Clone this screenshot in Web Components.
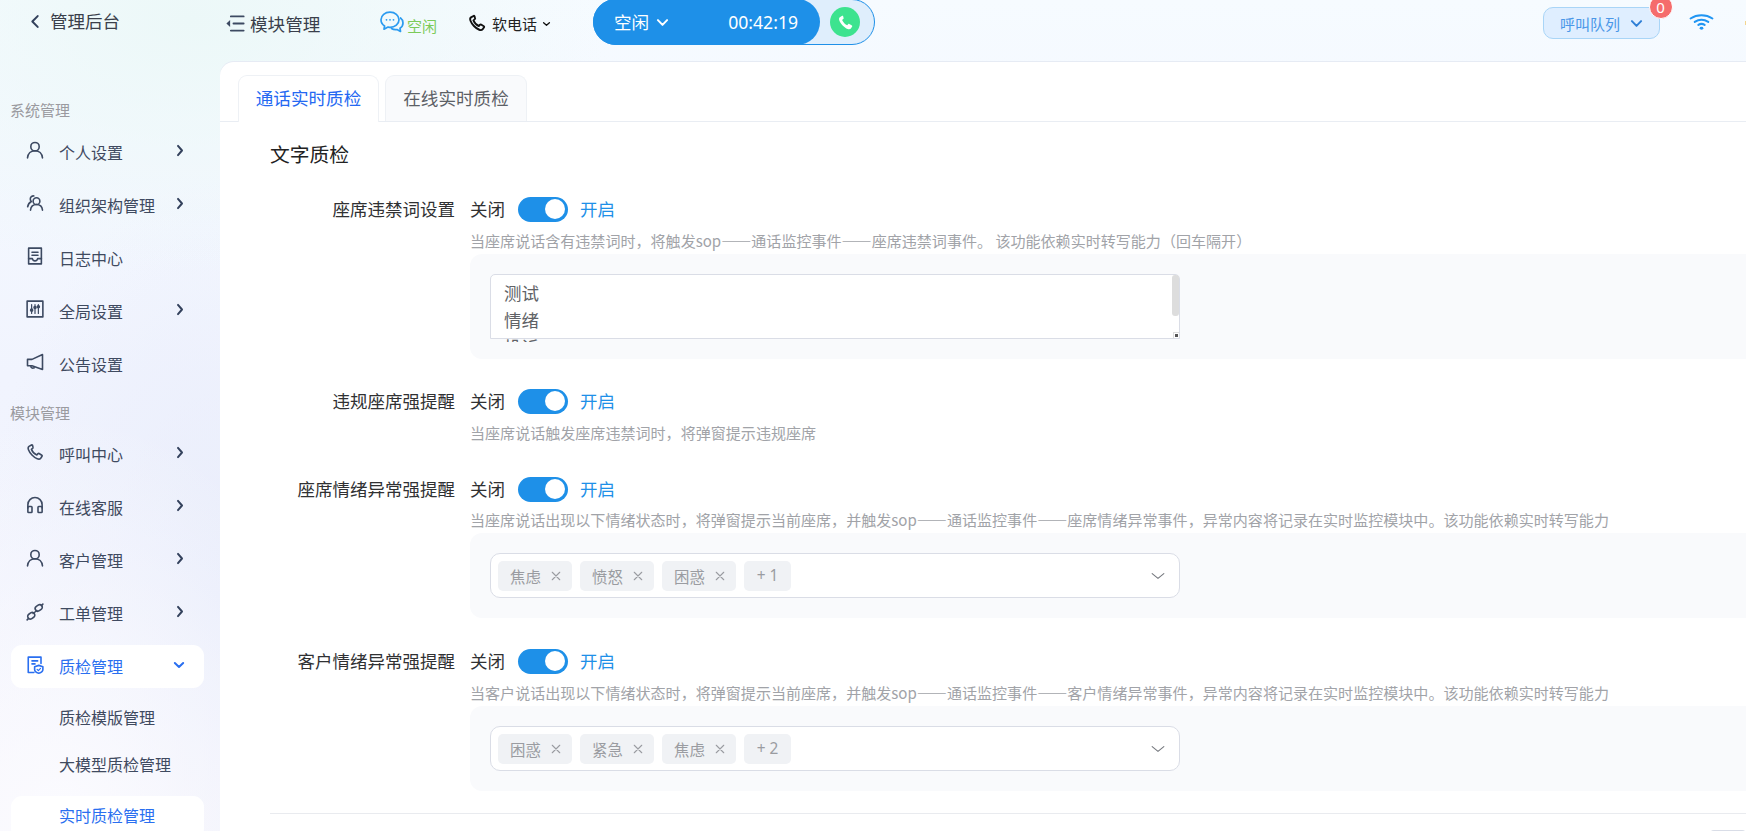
<!DOCTYPE html>
<html lang="zh-CN">
<head>
<meta charset="utf-8">
<title>实时质检管理</title>
<style>
html,body{margin:0;padding:0;height:831px;overflow:hidden}
body{font-family:"Noto Sans CJK SC","Noto Sans",sans-serif;color:#303133;
background:
radial-gradient(420px 260px at 190px 20px,#ecf8f8 0%,rgba(236,248,248,0) 100%),
radial-gradient(300px 420px at 60px 830px,#fbfbff 0%,rgba(251,251,255,0) 100%),
radial-gradient(240px 420px at 220px 600px,#e9edfb 0%,rgba(233,237,251,0) 100%),
linear-gradient(180deg,#f6fbff 0%,#f1f4fe 45%,#f1f3fd 70%,#f6f4fa 100%);}
</style>
</head>
<body>
<app-shell></app-shell>
<script>
const ICONS={
back:'<path d="M20 2L4 12l16 10" stroke-width="2"/>',
user:'<circle cx="12" cy="7.5" r="5.6"/><path d="M2 22.500c.6-5.800 4.600-9.600 10-9.600s9.400 3.800 10 9.600"/>',
org:'<circle cx="14" cy="9.500" r="4.500"/><path d="M6 21.500c.5-4.600 3.600-7.500 8-7.500s7.500 2.900 8 7.500"/><path d="M10.500 2.600a4.300 4.300 0 0 0-4.800 4.200c0 1.400.6 2.500 1.500 3.300C4.500 11.500 2.700 14 2.200 17"/>',
log:'<path d="M3.500 1.500h17v21h-17z"/><path d="M8 7h8M8 11h8"/><path d="M3.500 15.500h5c.5 2 1.700 3 3.500 3s3-1 3.500-3h5"/>',
cfg:'<rect x="1.500" y="1.500" width="21" height="21"/><path d="M7.500 6v12M12 6v12M16.500 6v12" stroke-width="1.200"/><circle cx="7.500" cy="13.500" r="1.300" fill="currentColor"/><circle cx="12" cy="10" r="1.300" fill="currentColor"/><circle cx="16.500" cy="9" r="1.300" fill="currentColor"/>',
horn:'<path d="M22 2v20L8 17H2V8.500h6z"/><path d="M6.500 17.300c-.2 2.400 1.800 3.600 4.500 2.400"/>',
phone:'<path d="M7.300 2.600 4 4.500C2.800 5.300 2.600 7 3.300 9c1.600 4.400 6.900 10.200 11.700 12 2 .8 3.700.4 4.600-.7l1.800-2.700c.3-.5.200-1-.3-1.300l-3.700-2.300c-.5-.3-1-.2-1.400.2l-1.600 1.800c-2.600-1-6-4.700-7.200-7.500l1.900-1.700c.4-.4.500-.9.200-1.300L8.700 3c-.4-.6-.9-.7-1.400-.4z"/>',
head:'<path d="M2.500 16v-4.500a9.500 9.500 0 0 1 19 0V16"/><rect x="2.500" y="14" width="5.500" height="8" rx="1"/><rect x="16" y="14" width="5.500" height="8" rx="1"/>',
link:'<rect x="12" y="3" width="10" height="7" rx="3.500" transform="rotate(-35 17 6.500)"/><rect x="2" y="13.500" width="10" height="7" rx="3.500" transform="rotate(-35 7 17)"/><path d="M9.500 14l5-4M1.500 22.500l2-2M20.500 3.500l2-2"/>',
qa:'<path d="M10.500 22H3V1.500h17V10"/><path d="M8 6.500h7.500M8 10.500h4"/><path d="M17 12.500l5.500 1.800v3.700c0 2.300-2.200 4-5.500 5-3.300-1-5.500-2.700-5.500-5v-3.700z"/><path d="M14.800 17.800l1.700 1.700 2.800-3" stroke-width="1.200"/>',
right:'<path d="M4 2l16 10L4 22" stroke-width="2"/>',
down:'<path d="M2 4l10 16L22 4" stroke-width="2"/>',
small:'<path d="M2 4l10 16L22 4" stroke-width="1.300"/>',
thin:'<path d="M2 5l10 14L22 5" stroke-width="1.100"/>',
close:'<path d="M3 3l18 18M21 3L3 21" stroke-width="1.100"/>',
menu:'<path d="M6.500 2h17M10 12h13.500M6.500 22h17" stroke-width="1.900"/><path d="M5.500 7v10L.5 12z" fill="currentColor" stroke="none"/>',
wifi:'<path d="M1.500 9.500c6.200-5.500 14.800-5.500 21 0" stroke-width="2"/><path d="M5.500 13.800c4-3.500 9-3.500 13 0" stroke-width="2"/><path d="M9 17.500c1.800-1.500 4.200-1.500 6 0" stroke-width="2"/><circle cx="12" cy="21.800" r="1.800" fill="currentColor" stroke="none"/>'
};
class XIcon extends HTMLElement{
  connectedCallback(){
    const s=this.getAttribute('size')||18,h=this.getAttribute('h')||s,sw=this.getAttribute('sw')||1.6;
    this.attachShadow({mode:'open'}).innerHTML=`<style>:host{display:inline-flex;flex:none;width:${s}px;height:${h}px}svg{width:100%;height:100%;display:block;overflow:visible}svg *{vector-effect:non-scaling-stroke}</style><svg viewBox="0 0 24 24" preserveAspectRatio="none" fill="none" stroke="currentColor" stroke-width="${sw}" stroke-linecap="round" stroke-linejoin="round">${ICONS[this.getAttribute('name')]||''}</svg>`;
  }
}
customElements.define('x-icon',XIcon);

class TopBar extends HTMLElement{
  connectedCallback(){
    this.attachShadow({mode:'open'}).innerHTML=`<style>
:host{display:flex;align-items:flex-start;height:62px;position:relative;color:#303133}
.back{display:flex;align-items:center;width:226px;height:42px;padding-left:31px;box-sizing:border-box;font-size:17.500px;line-height:42px;color:#3a3f4b}
.back x-icon{margin-right:11px;color:#33415c}
.mod{display:flex;align-items:center;width:154px;height:46px;font-size:17.600px;color:#3a3f4b}
.mod x-icon{margin-right:6px;color:#3d4a62}
.chat{display:flex;width:88px;height:46px;position:relative}
.chat svg{width:24px;height:22px;margin-top:11px}
.chat span{font-size:15px;line-height:20px;margin:16px 0 0 3px;color:#7ccb58}
.soft{display:flex;align-items:center;width:125px;height:46px;font-size:15px;color:#222}
.soft x-icon{margin-right:6px;color:#111}
.soft x-icon.c{margin:2px 0 0 6px}
.call{width:282px;height:46px;box-sizing:border-box;margin-top:-1px;border:1px solid #1e90e8;border-radius:24px;background:#dfeefc;display:flex;align-items:center}
.pill{width:227px;height:46px;margin-left:-1px;background:#1e90e8;border-radius:23px;display:flex;align-items:center;color:#fff;box-sizing:border-box;padding-left:21px}
.pill .st{font-size:17.600px;line-height:46px}
.pill x-icon{margin-left:8px}
.pill .t{font:17.600px/46px "Noto Sans",sans-serif;margin-left:60px}
.dial{width:30px;height:30px;border-radius:50%;background:#3de38f;margin-left:10px;display:flex;align-items:center;justify-content:center}
.dial svg{width:17px;height:17px}
.spacer{flex:1}
.queue{position:relative;width:117px;height:32px;margin-top:7px;box-sizing:border-box;border:1px solid #a9d5f7;border-radius:10px;background:#dfeeff;color:#4a97e8;font-size:15px;display:flex;align-items:center;padding-left:16px}
.queue x-icon{margin-left:11px;color:#2f7fd6}
.badge{position:absolute;right:-13.500px;top:-13px;border-radius:50%;background:#f56c6c;border:1.500px solid #fff;color:#fff;font:15px/23px "Noto Sans",sans-serif;text-align:center;width:22px;height:22px}
.wifi{margin:11px 31px 0 29px;color:#2196f3}
.tick{width:1px;height:4px;margin-top:21px;background:#f3d58e}
</style>
<div class="back"><x-icon name="back" size="8" h="13"></x-icon><span>管理后台</span></div>
<div class="mod"><x-icon name="menu" size="18" h="17"></x-icon><span>模块管理</span></div>
<div class="chat"><svg viewBox="0 0 24 22" fill="none" stroke="#2b9bf0" stroke-width="1.700" stroke-linejoin="round" stroke-linecap="round"><path d="M10 1.200c-5 0-9 3.300-9 7.600 0 2.600 1.400 4.800 3.600 6.200l-.6 3.200 4-2.100c.7.100 1.300.200 2 .200 5 0 9-3.300 9-7.500S15 1.200 10 1.200z"/><path d="M20.500 7c1.600 1.200 2.500 3 2.500 4.900 0 2.200-1.200 4.100-3 5.300l.5 3.300-3.500-1.900c-2.100.3-4-.1-5.500-1.100"/><circle cx="6.500" cy="8.800" r=".9" fill="#2b9bf0" stroke="none"/><circle cx="10" cy="8.800" r=".9" fill="#2b9bf0" stroke="none"/><circle cx="13.500" cy="8.800" r=".9" fill="#2b9bf0" stroke="none"/></svg><span>空闲</span></div>
<div class="soft"><x-icon name="phone" size="18" sw="1.900"></x-icon><span>软电话</span><x-icon class="c" name="small" size="7" h="4"></x-icon></div>
<div class="call"><div class="pill"><span class="st">空闲</span><x-icon name="down" size="11" h="7"></x-icon><span class="t">00:42:19</span></div>
<div class="dial"><svg viewBox="0 0 24 24"><path fill="#fff" d="M7.300 2.600 4 4.500C2.800 5.300 2.600 7 3.300 9c1.600 4.400 6.900 10.200 11.700 12 2 .8 3.700.4 4.600-.7l1.800-2.700c.3-.5.200-1-.3-1.300l-3.700-2.300c-.5-.3-1-.2-1.400.2l-1.600 1.800c-2.600-1-6-4.700-7.200-7.500l1.900-1.700c.4-.4.500-.9.200-1.300L8.700 3c-.4-.6-.9-.7-1.400-.4z"/></svg></div></div>
<div class="spacer"></div>
<div class="queue"><span>呼叫队列</span><x-icon name="down" size="11" h="7"></x-icon><span class="badge">0</span></div>
<x-icon class="wifi" name="wifi" size="25" h="19"></x-icon>
<span class="tick"></span>`;
  }
}
customElements.define('top-bar',TopBar);

class NavLabel extends HTMLElement{
  connectedCallback(){
    this.attachShadow({mode:'open'}).innerHTML=`<style>:host{display:block;height:20px;padding-left:10px;font-size:15px;line-height:20px;color:#9a9a9f}</style><slot></slot>`;
  }
}
customElements.define('nav-label',NavLabel);

class NavItem extends HTMLElement{
  connectedCallback(){
    const ic=this.getAttribute('icon'),ar=this.getAttribute('arrow');
    this.attachShadow({mode:'open'}).innerHTML=`<style>
:host{display:flex;align-items:center;height:43px;width:193px;margin:0 0 10px 11px;box-sizing:border-box;padding-left:15px;border-radius:11px;font-size:16px;color:#3f4a60;position:relative}
:host([active]){background:#fff;color:#2a6ff0}
:host([sub]){padding-left:48px;color:#3f4a60}
:host([sub][active]){color:#2a6ff0;padding-bottom:4.400px}
.ic{color:#3d4a62;margin:-3px 15px 0 0}
:host([active]) .ic{color:#2a6ff0}
.t{flex:1;line-height:22px}
.ar{margin:-3px 21px 0 0;color:#33415c}
:host([active]) .ar{color:#2a6ff0;margin-right:20px}
</style>${ic?`<x-icon class="ic" name="${ic}" size="18"></x-icon>`:''}<span class="t"><slot></slot></span>${ar?`<x-icon class="ar" name="${ar}" size="${ar==='down'?10:6}" h="${ar==='down'?6:11}"></x-icon>`:''}`;
  }
}
customElements.define('nav-item',NavItem);

class SideNav extends HTMLElement{
  connectedCallback(){
    this.attachShadow({mode:'open'}).innerHTML=`<style>
:host{display:block;width:220px;flex:none;padding-top:38px;box-sizing:border-box}
nav-label{margin-bottom:10px}
.g2{margin-top:17.700px;margin-bottom:9.400px}
.m{margin-bottom:10.200px}
.qa{margin-bottom:7.800px}
.s1{margin-bottom:3.900px}
.s2{margin-bottom:10.300px}
</style>
<nav-label>系统管理</nav-label>
<nav-item icon="user" arrow="right">个人设置</nav-item>
<nav-item icon="org" arrow="right">组织架构管理</nav-item>
<nav-item icon="log">日志中心</nav-item>
<nav-item icon="cfg" arrow="right">全局设置</nav-item>
<nav-item icon="horn">公告设置</nav-item>
<nav-label class="g2">模块管理</nav-label>
<nav-item class="m" icon="phone" arrow="right">呼叫中心</nav-item>
<nav-item class="m" icon="head" arrow="right">在线客服</nav-item>
<nav-item class="m" icon="user" arrow="right">客户管理</nav-item>
<nav-item class="m" icon="link" arrow="right">工单管理</nav-item>
<nav-item class="qa" icon="qa" arrow="down" active>质检管理</nav-item>
<nav-item class="s1" sub>质检模版管理</nav-item>
<nav-item class="s2" sub>大模型质检管理</nav-item>
<nav-item sub active>实时质检管理</nav-item>`;
  }
}
customElements.define('side-nav',SideNav);

class TabBar extends HTMLElement{
  connectedCallback(){
    this.attachShadow({mode:'open'}).innerHTML=`<style>
:host{display:flex;gap:6px;height:46px;margin-top:13px;padding-left:18px;border-bottom:1px solid #e9edf3;font-size:17.600px;box-sizing:content-box}
.tab{height:46px;box-sizing:border-box;border:1px solid #eef1f5;border-bottom:0;border-radius:9px 9px 0 0;background:#f9fafc;color:#5c5f66;line-height:43px;text-align:center}
.tab.on{width:141px;background:#fff;color:#2468f2;height:47px;}
.tab.off{width:142px}
</style><div class="tab on">通话实时质检</div><div class="tab off">在线实时质检</div>`;
  }
}
customElements.define('tab-bar',TabBar);

class XToggle extends HTMLElement{
  connectedCallback(){
    this.attachShadow({mode:'open'}).innerHTML=`<style>
:host{display:inline-flex;align-items:center;font-size:17.500px;line-height:26px;color:#303133}
.sw{width:50px;height:25px;border-radius:13px;background:#1e90e8;margin:0 12px 0 13px;position:relative;flex:none}
.sw i{position:absolute;right:3px;top:2.500px;width:20px;height:20px;border-radius:50%;background:#fff}
.on{color:#1e90e8}
</style><span>关闭</span><span class="sw"><i></i></span><span class="on">开启</span>`;
  }
}
customElements.define('x-toggle',XToggle);

class QaField extends HTMLElement{
  connectedCallback(){
    const g=this.getAttribute('gap')||9;
    this.attachShadow({mode:'open'}).innerHTML=`<style>
:host{display:grid;grid-template-columns:235px 1fr;column-gap:15px}
.lb{text-align:right;font-size:17.500px;line-height:26px;color:#303133}
.hd{height:26px;display:flex}
.hint{margin-top:${g}px;font-size:15.050px;line-height:20px;color:#a1a3a8;white-space:nowrap}
</style><div class="lb">${this.getAttribute('label')}</div><div><div class="hd"><x-toggle></x-toggle></div><div class="hint">${this.getAttribute('hint')}</div><slot></slot></div>`;
  }
}
customElements.define('qa-field',QaField);

class GreyBox extends HTMLElement{
  connectedCallback(){
    this.attachShadow({mode:'open'}).innerHTML=`<style>:host{display:block;margin-top:3px;padding:20px;background:#f9fafc;border-radius:12px 0 0 12px}</style><slot></slot>`;
  }
}
customElements.define('grey-box',GreyBox);

class WordBox extends HTMLElement{
  connectedCallback(){
    const lines=(this.getAttribute('lines')||'').split('|').map(l=>`<div>${l}</div>`).join('');
    this.attachShadow({mode:'open'}).innerHTML=`<style>
:host{display:block;width:690px;height:65px;box-sizing:border-box;border:1px solid #dadde6;border-radius:5px 5px 0 0;background:#fff;position:relative;padding:4px 13px 0;font-size:17.500px;line-height:27px;color:#606266}
.lines{height:63px;overflow:hidden}
.bar{position:absolute;right:0;top:0;width:7px;height:41px;background:#ddd;border-radius:3px}
.grip{position:absolute;right:0;bottom:0;width:6px;height:6px;background:#fff;border-left:1px solid #ddd;border-top:1px solid #ddd;box-sizing:border-box}
.grip:after{content:"";position:absolute;right:1px;bottom:1px;width:3px;height:3px;background:#555}
</style><div class="lines">${lines}</div><span class="bar"></span><span class="grip"></span>`;
  }
}
customElements.define('word-box',WordBox);

class TagSelect extends HTMLElement{
  connectedCallback(){
    const tags=this.getAttribute('tags').split('|').map(t=>`<span class="tag">${t}<x-icon name="close" size="10"></x-icon></span>`).join('');
    this.attachShadow({mode:'open'}).innerHTML=`<style>
:host{display:flex;align-items:center;gap:8px;width:690px;height:45px;box-sizing:border-box;padding:0 14px 0 7px;border:1px solid #dadde6;border-radius:10px;background:#fff;font-size:15.400px;color:#9a9ca1}
.tag{display:flex;align-items:center;justify-content:space-between;width:74px;height:30px;box-sizing:border-box;padding:0 11px 0 12px;background:#f0f2f5;border-radius:5px;line-height:30px}
.tag x-icon{color:#9a9ca1}
.more{width:47px;justify-content:center;padding:0;font-family:"Noto Sans",sans-serif;font-size:15.400px}
.sp{flex:1}
.ch{color:#74777d}
</style>${tags}<span class="tag more">${this.getAttribute('more')}</span><span class="sp"></span><x-icon class="ch" name="thin" size="14" h="8"></x-icon>`;
  }
}
customElements.define('tag-select',TagSelect);

class QaPanel extends HTMLElement{
  connectedCallback(){
    this.attachShadow({mode:'open'}).innerHTML=`<style>
:host{display:block;flex:1;min-width:0;background:#fff;border-radius:14px 0 0 0;box-shadow:0 -1px 0 #e6ebf4;overflow:hidden;height:769px}
h2{margin:18px 0 0 50px;font-weight:400;line-height:28px;color:#222;height:28px;font-size:19.800px;}
.f1{margin-top:28px}.f2{margin-top:29px}.f3{margin-top:33px}.f4{margin-top:30px}
.div{height:1px;background:#e9ebef;margin:22px 0 16px 50px}
.foot{display:flex;justify-content:flex-end}
.foot i{display:block;width:36px;height:30px;background:#d9dde7;border-radius:4px}
</style>
<tab-bar></tab-bar>
<h2>文字质检</h2>
<qa-field class="f1" label="座席违禁词设置" hint="当座席说话含有违禁词时，将触发sop——通话监控事件——座席违禁词事件。 该功能依赖实时转写能力（回车隔开）"><grey-box><word-box lines="测试|情绪|投诉"></word-box></grey-box></qa-field>
<qa-field class="f2" label="违规座席强提醒" hint="当座席说话触发座席违禁词时，将弹窗提示违规座席"></qa-field>
<qa-field class="f3" gap="8" label="座席情绪异常强提醒" hint="当座席说话出现以下情绪状态时，将弹窗提示当前座席，并触发sop——通话监控事件——座席情绪异常事件，异常内容将记录在实时监控模块中。该功能依赖实时转写能力"><grey-box><tag-select tags="焦虑|愤怒|困惑" more="+ 1"></tag-select></grey-box></qa-field>
<qa-field class="f4" gap="9" label="客户情绪异常强提醒" hint="当客户说话出现以下情绪状态时，将弹窗提示当前座席，并触发sop——通话监控事件——客户情绪异常事件，异常内容将记录在实时监控模块中。该功能依赖实时转写能力"><grey-box><tag-select tags="困惑|紧急|焦虑" more="+ 2"></tag-select></grey-box></qa-field>
<div class="div"></div>
<div class="foot"><i></i></div>`;
  }
}
customElements.define('qa-panel',QaPanel);

class AppShell extends HTMLElement{
  connectedCallback(){
    this.attachShadow({mode:'open'}).innerHTML=`<style>
:host{display:block;width:1746px;height:831px;overflow:hidden}
.body{display:flex;height:769px}
</style><top-bar></top-bar><div class="body"><side-nav></side-nav><qa-panel></qa-panel></div>`;
  }
}
customElements.define('app-shell',AppShell);
</script>
</body>
</html>
